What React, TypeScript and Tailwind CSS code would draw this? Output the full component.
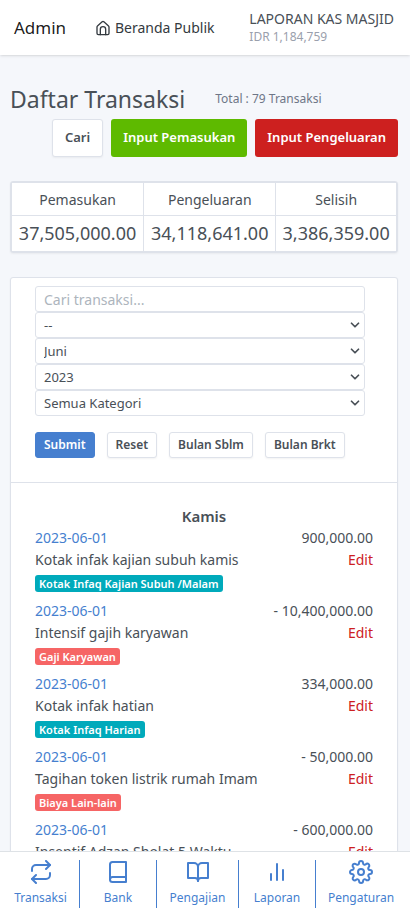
import { useState, type ReactNode, type SelectHTMLAttributes } from 'react';
import type { IconType } from 'react-icons';
import { FiBarChart2, FiBook, FiBookOpen, FiChevronDown, FiRepeat, FiSettings } from 'react-icons/fi';

type Transaction = {
  date: string;
  amount: string;
  description: string;
  category?: string;
  kind: 'in' | 'out';
};

const transactions: Transaction[] = [
  { date: '2023-06-01', amount: '900,000.00', description: 'Kotak infak kajian subuh kamis', category: 'Kotak Infaq Kajian Subuh /Malam', kind: 'in' },
  { date: '2023-06-01', amount: '- 10,400,000.00', description: 'Intensif gajih karyawan', category: 'Gaji Karyawan', kind: 'out' },
  { date: '2023-06-01', amount: '334,000.00', description: 'Kotak infak hatian', category: 'Kotak Infaq Harian', kind: 'in' },
  { date: '2023-06-01', amount: '- 50,000.00', description: 'Tagihan token listrik rumah Imam', category: 'Biaya Lain-lain', kind: 'out' },
  { date: '2023-06-01', amount: '- 600,000.00', description: 'Insentif Adzan Sholat 5 Waktu', kind: 'out' },
];

const months = ['Januari', 'Februari', 'Maret', 'April', 'Mei', 'Juni', 'Juli', 'Agustus', 'September', 'Oktober', 'November', 'Desember'];

const navItems: { label: string; Icon: IconType }[] = [
  { label: 'Transaksi', Icon: FiRepeat },
  { label: 'Bank', Icon: FiBook },
  { label: 'Pengajian', Icon: FiBookOpen },
  { label: 'Laporan', Icon: FiBarChart2 },
  { label: 'Pengaturan', Icon: FiSettings },
];

function HomeIcon() {
  return (
    <svg viewBox="0 0 24 24" fill="none" stroke="currentColor" strokeWidth="2" strokeLinecap="round" strokeLinejoin="round" className="size-4" aria-hidden="true">
      <path d="M3 10.500a2 2 0 0 1 .700-1.500l7-6.200a2 2 0 0 1 2.600 0l7 6.200a2 2 0 0 1 .700 1.500V20a2 2 0 0 1-2 2H5a2 2 0 0 1-2-2z" />
      <path d="M8 22v-8a4 4 0 0 1 8 0v8" />
    </svg>
  );
}

function Select({ children, ...props }: SelectHTMLAttributes<HTMLSelectElement> & { children: ReactNode }) {
  return (
    <div className="relative">
      <select {...props} className="block h-[26px] w-full appearance-none rounded-[3px] border border-[#dee2ea] bg-white pr-6 pl-2 text-[13px] leading-5 text-[#495057]">
        {children}
      </select>
      <FiChevronDown className="pointer-events-none absolute top-1.5 right-[3px] size-3.5" strokeWidth={3} aria-hidden="true" />
    </div>
  );
}

const smallButton =
  'h-[26px] rounded-[3px] border border-[#dee2ea] bg-white px-2 text-[12px] font-semibold whitespace-nowrap shadow-xs';

export default function App() {
  const [month, setMonth] = useState('Juni');
  const [query, setQuery] = useState('');

  return (
    <div className="flex h-screen flex-col bg-[#f5f7fb] font-['Noto_Sans',sans-serif] text-[14px] leading-normal text-[#495057]">
      <header className="relative flex h-[55px] shrink-0 items-center justify-between bg-white pr-4 pl-3.5 shadow-sm">
        <a href="#admin" className="text-[17px] text-black/90">Admin</a>
        <a href="#beranda" className="flex items-center gap-1 pr-1.5 text-[14px] text-[#343a40]">
          <HomeIcon />
          Beranda Publik
        </a>
        <div>
          <div className="text-[14px] leading-[18px]">LAPORAN KAS MASJID</div>
          <div className="text-[12px] leading-[18px] text-[#9aa0ac]">IDR 1,184,759</div>
        </div>
      </header>

      <main className="min-h-0 flex-1 overflow-y-auto pt-[26px] pr-3 pl-2.5 [scrollbar-width:none]">
        <div className="flex items-center gap-[30px]">
          <h1 className="text-[23px] leading-9">Daftar Transaksi</h1>
          <span className="text-[12px] text-[#6e7687]">Total : 79 Transaksi</span>
        </div>
        <div className="mt-0.5 flex justify-end gap-2">
          <button type="button" className="h-[38px] rounded-[3px] border border-[#dee2ea] bg-white px-3 text-[13px] font-semibold shadow-xs">Cari</button>
          <button type="button" className="h-[38px] rounded-[3px] bg-[#5eba00] px-3 text-[13px] font-semibold whitespace-nowrap text-white">Input Pemasukan</button>
          <button type="button" className="h-[38px] rounded-[3px] bg-[#cd201f] px-3 text-[13px] font-semibold whitespace-nowrap text-white">Input Pengeluaran</button>
        </div>

        <div className="mt-6 rounded-[3px] border border-[#dee2ea] bg-white shadow-xs">
          <table className="w-full border-collapse border border-[#dee2ea] text-center">
            <thead>
              <tr>
                <th className="h-[33px] border border-[#dee2ea] font-normal">Pemasukan</th>
                <th className="border border-[#dee2ea] font-normal">Pengeluaran</th>
                <th className="border border-[#dee2ea] font-normal">Selisih</th>
              </tr>
            </thead>
            <tbody className="text-[18px]">
              <tr>
                <td className="h-[36px] border border-[#dee2ea]">37,505,000.00</td>
                <td className="border border-[#dee2ea]">34,118,641.00</td>
                <td className="border border-[#dee2ea]">3,386,359.00</td>
              </tr>
            </tbody>
          </table>
        </div>

        <section className="mt-6 rounded-[3px] border border-[#dee2ea] bg-white shadow-xs">
          <form className="border-b border-[#dee2ea] px-6 pt-2 pb-6" onSubmit={(event) => event.preventDefault()}>
            <div className="mr-2">
              <input
                type="text"
                aria-label="Cari transaksi"
                placeholder="Cari transaksi..."
                value={query}
                onChange={(event) => setQuery(event.target.value)}
                className="block h-[26px] w-full rounded-[3px] border border-[#dee2ea] bg-white px-2 text-[14px] leading-5 placeholder:text-[#adb5bd]"
              />
              <Select aria-label="Tanggal">
                <option>--</option>
              </Select>
              <Select aria-label="Bulan" value={month} onChange={(event) => setMonth(event.target.value)}>
                {months.map((name) => (
                  <option key={name}>{name}</option>
                ))}
              </Select>
              <Select aria-label="Tahun">
                <option>2023</option>
                <option>2022</option>
              </Select>
              <Select aria-label="Kategori">
                <option>Semua Kategori</option>
              </Select>
            </div>
            <div className="mt-4 flex gap-3">
              <button type="submit" className="h-[26px] rounded-[3px] border border-[#467fcf] bg-[#467fcf] px-2 text-[12px] font-semibold text-white">Submit</button>
              <button type="reset" className={smallButton} onClick={() => setQuery('')}>Reset</button>
              <button type="button" className={smallButton}>Bulan Sblm</button>
              <button type="button" className={smallButton}>Bulan Brkt</button>
            </div>
          </form>

          <div className="px-6 pt-[22px] pb-6">
            <h2 className="text-center text-[15px] leading-[22px] font-semibold">Kamis</h2>
            <ul>
              {transactions.map((item, index) => (
                <li key={index} className="pb-[5px] text-[14px] leading-[22px]">
                  <div className="flex justify-between">
                    <a href="#tanggal" className="text-[#467fcf]">{item.date}</a>
                    <span>{item.amount}</span>
                  </div>
                  <div className="flex justify-between">
                    <span>{item.description}</span>
                    <a href="#edit" className="text-[#cd201f]">Edit</a>
                  </div>
                  {item.category && (
                    <div className="flex h-6 items-center">
                      <span className={`rounded-[3px] px-1 text-[11px] leading-[17px] font-semibold text-white ${item.kind === 'in' ? 'bg-[#00aabb]' : 'bg-[#f66565]'}`}>
                        {item.category}
                      </span>
                    </div>
                  )}
                </li>
              ))}
            </ul>
          </div>
        </section>
      </main>

      <nav className="relative grid h-16 shrink-0 grid-cols-[80fr_77fr_82fr_77fr_94fr] border-t border-[#dee2e6] bg-white py-2 text-[12px] text-[#467fcf]">
        {navItems.map(({ label, Icon }) => (
          <a key={label} href="#menu" className="flex flex-col items-center border-r border-[#467fcf] first:pl-0.5 last:border-r-0 last:pr-1">
            <Icon className="size-6" aria-hidden="true" />
            <span className="mt-1 leading-5">{label}</span>
          </a>
        ))}
      </nav>
    </div>
  );
}
